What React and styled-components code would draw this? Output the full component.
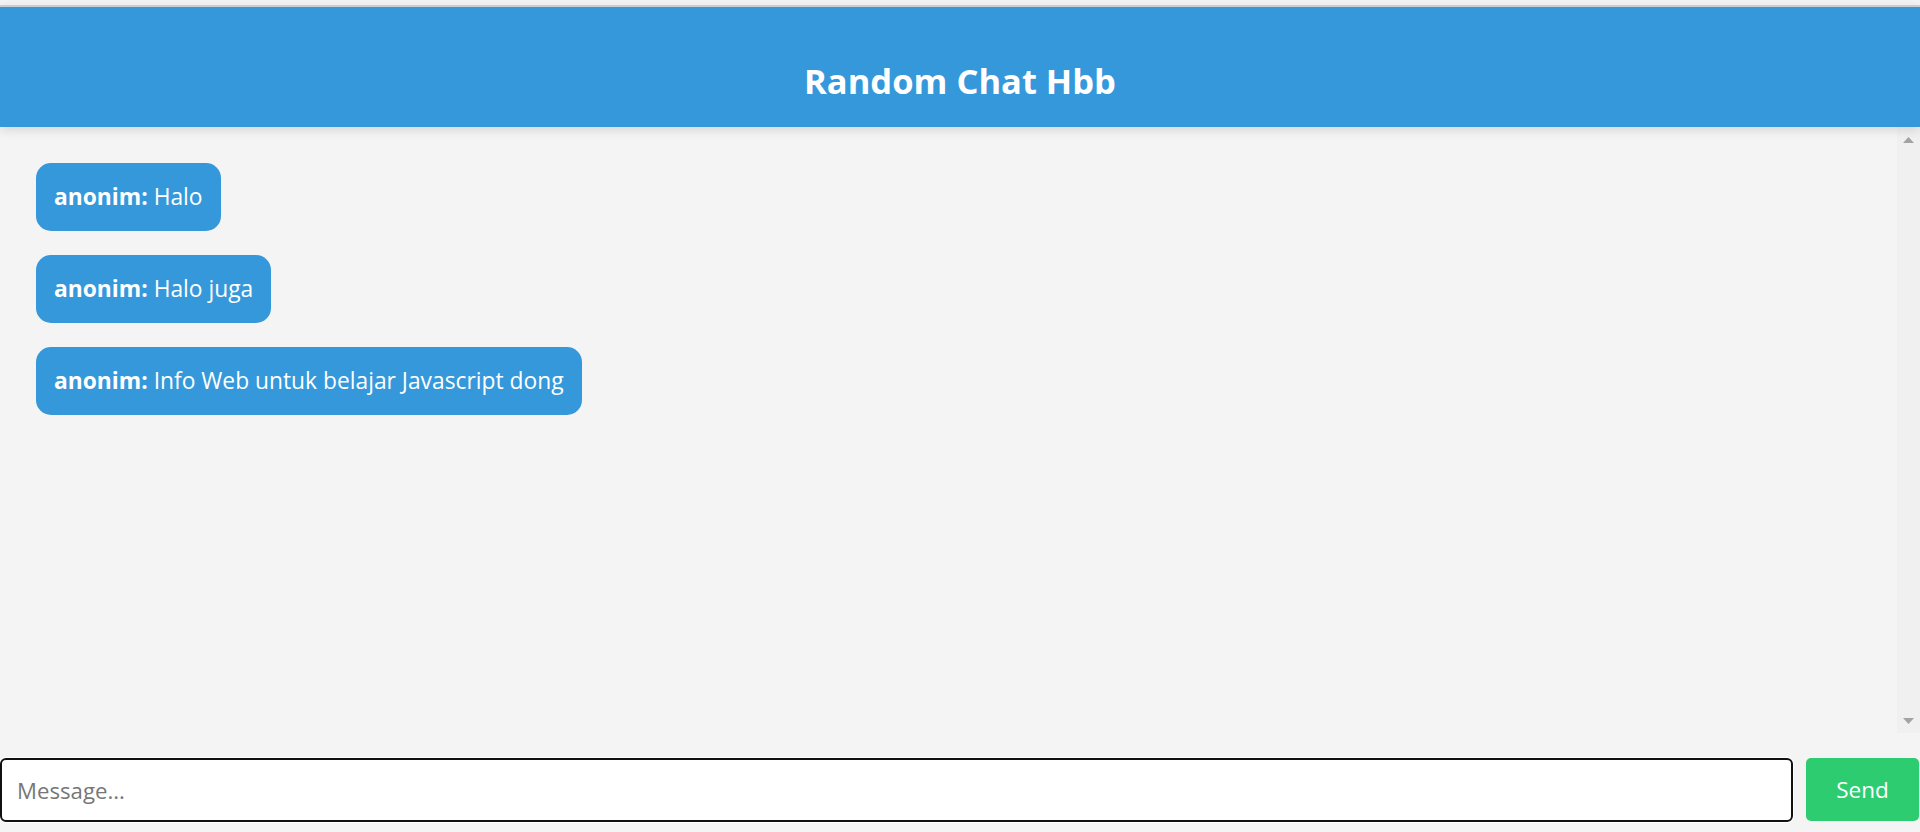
import React from "react";
import styled, { createGlobalStyle } from "styled-components";

const GlobalStyle = createGlobalStyle`
  html, body {
    margin: 0;
    padding: 0;
    background: #f4f4f4;
  }
  * { box-sizing: border-box; }
  body {
    font-family: "Open Sans", "Noto Sans", sans-serif;
  }
`;

const Page = styled.div`
  display: flex;
  flex-direction: column;
  height: 100vh;
  padding-top: 5px;
  background: #f4f4f4;
`;

const Header = styled.header`
  flex: none;
  position: relative;
  z-index: 1;
  height: 122px;
  border-top: 2px solid #cdcdcd;
  padding-top: 28px;
  display: flex;
  align-items: center;
  justify-content: center;
  background: #3498db;
  box-shadow: 0 3px 10px rgba(0, 0, 0, 0.12);
`;

const Title = styled.h1`
  margin: 0;
  color: #ffffff;
  font-size: 34.5px;
  font-weight: 700;
  line-height: 1;
`;

const ChatArea = styled.section`
  flex: 1;
  min-height: 0;
  display: flex;
`;

const Messages = styled.main`
  flex: 1;
  min-width: 0;
  overflow: hidden;
  padding: 36px 0 0 36px;
  display: flex;
  flex-direction: column;
  align-items: flex-start;
  gap: 24px;
`;

const ScrollTrack = styled.div`
  flex: none;
  width: 23px;
  background: #f0f0f0;
  display: flex;
  flex-direction: column;
  align-items: center;
  justify-content: space-between;
  padding: 10px 0 9px;
`;

const Arrow = ({ down }) => (
  <svg width="11" height="6" viewBox="0 0 11 6" aria-hidden="true">
    <path d={down ? "M0 0L5.5 6L11 0Z" : "M0 6L5.5 0L11 6Z"} fill="#a3a3a3" />
  </svg>
);

const Bubble = styled.div`
  background: #3498db;
  color: #ffffff;
  border-radius: 15px;
  padding: 20px 18px;
  font-size: 22.8px;
  line-height: 28px;
  white-space: nowrap;
`;

const Sender = styled.strong`
  font-weight: 700;
`;

const InputBar = styled.form`
  flex: none;
  display: flex;
  gap: 13px;
  padding: 25px 1px 10px 0;
`;

const MessageInput = styled.input`
  flex: 1;
  height: 64px;
  border: 2px solid #101010;
  border-radius: 6px;
  box-shadow: 0 0 0 1px #ffffff;
  outline: none;
  padding: 0 15px;
  background: #ffffff;
  font-family: "Open Sans", "Noto Sans", sans-serif;
  font-size: 22.2px;
  color: #222;
  caret-color: #000;

  &::placeholder {
    color: #777777;
  }
`;

const SendButton = styled.button`
  flex: none;
  width: 113px;
  height: 63px;
  border: none;
  border-radius: 5px;
  background: #2ecc71;
  color: #ffffff;
  font-family: "Open Sans", "Noto Sans", sans-serif;
  font-size: 22.5px;
  cursor: pointer;
`;

const messages = [
  { sender: "anonim", text: "Halo" },
  { sender: "anonim", text: "Halo juga" },
  { sender: "anonim", text: "Info Web untuk belajar Javascript dong" },
];

export default function App() {
  return (
    <>
      <GlobalStyle />
      <Page>
        <Header>
          <Title>Random Chat Hbb</Title>
        </Header>
        <ChatArea>
          <Messages>
            {messages.map((m, i) => (
              <Bubble key={i}>
                <Sender>{m.sender}:</Sender> {m.text}
              </Bubble>
            ))}
          </Messages>
          <ScrollTrack>
            <Arrow />
            <Arrow down />
          </ScrollTrack>
        </ChatArea>
        <InputBar onSubmit={(e) => e.preventDefault()}>
          <MessageInput placeholder="Message..." autoFocus />
          <SendButton type="submit">Send</SendButton>
        </InputBar>
      </Page>
    </>
  );
}
